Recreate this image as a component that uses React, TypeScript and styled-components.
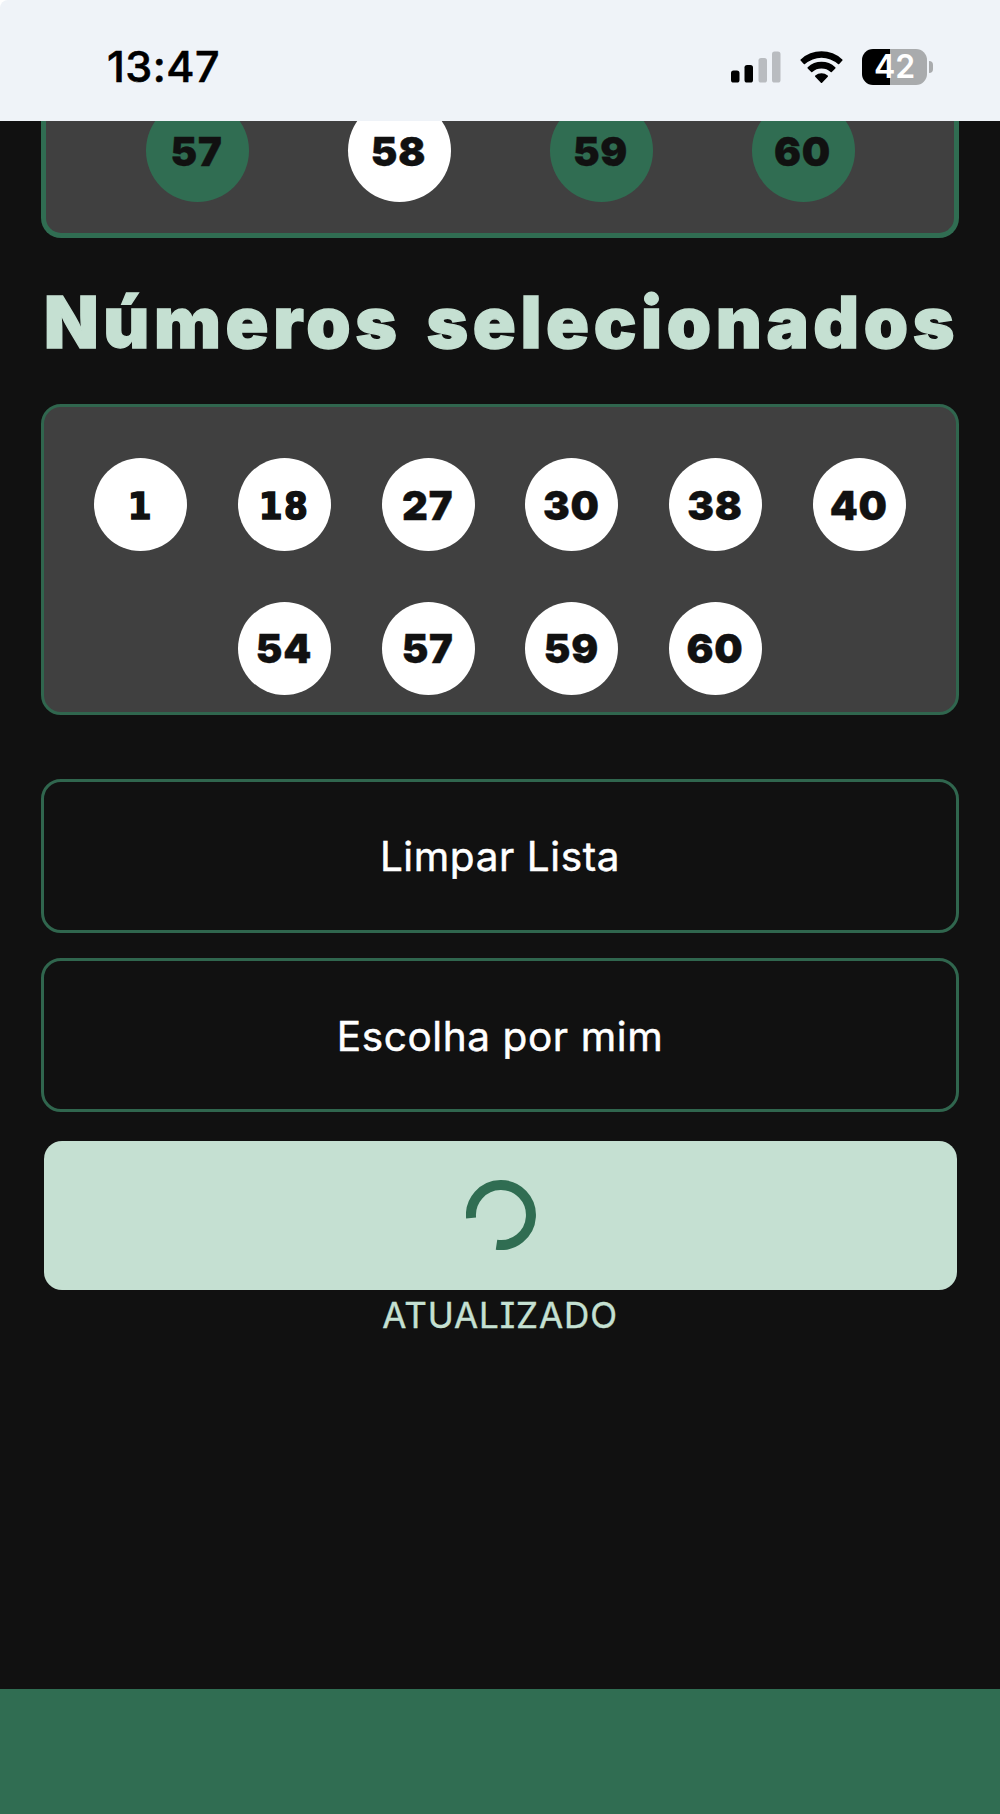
import React from 'react';
import styled, { createGlobalStyle } from 'styled-components';

const color = {
  ink: '#111111',
  panel: '#404040',
  green: '#306d52',
  line: '#30664e',
  mint: '#c5e0d2',
  status: '#eff3f8',
};

const GlobalStyle = createGlobalStyle`
  *, *::before, *::after { box-sizing: border-box; }
  body { margin: 0; background: ${color.ink}; }
`;

const Screen = styled.div`
  display: flex;
  flex-direction: column;
  height: 1814px;
  overflow: hidden;
  background: #ffffff;
  color: #ffffff;
  font-family: Inter, "Liberation Sans", sans-serif;
`;

const StatusBar = styled.header`
  flex: none;
  display: flex;
  align-items: center;
  justify-content: space-between;
  height: 120.5px;
  padding: 13px 67px 0 107px;
  border-top-left-radius: 8px;
  background: ${color.status};
  color: #000000;
`;

const Time = styled.span`
  margin-top: -2px;
  font-size: 43px;
  font-weight: 500;
  line-height: 52px;
  letter-spacing: 0.5px;
  -webkit-text-stroke: 0.6px #000000;
`;

const StatusIcons = styled.div`
  display: flex;
  align-items: center;
`;

const SignalIcon = styled.svg`
  width: 50px;
  height: 32px;
  margin-right: 19px;
`;

const WifiIcon = styled.svg`
  width: 43px;
  height: 34px;
  margin-right: 19px;
`;

const Battery = styled.div`
  display: flex;
  align-items: center;
  gap: 2px;
`;

const BatteryBody = styled.div`
  display: flex;
  align-items: center;
  justify-content: center;
  width: 65px;
  height: 36px;
  border-radius: 11px;
  background: linear-gradient(to right, #000000 0 28px, #a9abad 28px);
  color: #ffffff;
  font-size: 32px;
  font-weight: 600;
  line-height: 36px;
`;

const BatteryTip = styled.div`
  width: 4px;
  height: 12px;
  border-radius: 0 5px 5px 0;
  background: #a9abad;
`;

const Content = styled.main`
  flex: 1;
  display: flex;
  flex-direction: column;
  padding: 0 41px;
  background: ${color.ink};
`;

const GridPanel = styled.section`
  flex: none;
  display: flex;
  align-items: flex-end;
  justify-content: center;
  gap: 99px;
  height: 117.5px;
  padding-bottom: 31px;
  border: 5px solid ${color.green};
  border-top: 0;
  border-radius: 0 0 20px 20px;
  background: ${color.panel};
  overflow: hidden;
`;

const Ball = styled.span<{ $size: number; $taken?: boolean; $footed?: boolean }>`
  flex: none;
  display: flex;
  align-items: center;
  justify-content: center;
  width: ${(p) => p.$size}px;
  height: ${(p) => p.$size}px;
  padding: 2px 1px 0 0;
  border-radius: 50%;
  background: ${(p) => (p.$taken ? color.green : '#ffffff')};
  color: ${color.ink};
  font-family: ${(p) =>
    p.$footed
      ? '"DejaVu Sans Condensed", "DejaVu Sans", sans-serif'
      : 'Inter, "Liberation Sans", sans-serif'};
  font-stretch: ${(p) => (p.$footed ? 'condensed' : 'normal')};
  font-size: ${(p) => (p.$footed ? 38 : 40)}px;
  font-weight: ${(p) => (p.$footed ? 700 : 900)};
  line-height: 1;
  letter-spacing: ${(p) => (p.$footed ? 1.5 : 0.8)}px;
  -webkit-text-stroke: ${(p) => (p.$footed ? 1.5 : 0.4)}px ${color.ink};
`;

const Title = styled.h1`
  margin: 41px 0 1.5px;
  font-size: 71px;
  font-weight: 900;
  line-height: 86px;
  letter-spacing: 4.6px;
  word-spacing: 6px;
  text-align: center;
  text-indent: 3px;
  white-space: nowrap;
  color: ${color.mint};
  -webkit-text-stroke: 1.3px ${color.mint};
`;

const SelectedPanel = styled.section`
  flex: none;
  display: flex;
  flex-direction: column;
  gap: 50.7px;
  height: 311px;
  margin-top: 37.5px;
  padding-top: 51px;
  border: 3px solid ${color.line};
  border-radius: 20px;
  background: ${color.panel};
`;

const BallRow = styled.div`
  display: flex;
  justify-content: center;
  gap: 50.7px;
`;

const Actions = styled.div`
  display: flex;
  flex-direction: column;
  margin-top: 63.5px;
`;

const OutlineButton = styled.button`
  height: 154px;
  margin: 0 0 25.7px;
  padding: 2px 0 0;
  border: 3px solid ${color.line};
  border-radius: 20px;
  background: transparent;
  color: #ffffff;
  font-family: inherit;
  font-size: 40.5px;
  font-weight: 400;
  letter-spacing: 0.6px;
  -webkit-text-stroke: 0.5px #ffffff;
`;

const SaveButton = styled.button`
  display: flex;
  align-items: center;
  justify-content: center;
  height: 149.5px;
  margin: 3px 2.5px 0;
  padding: 0 0 1px 1px;
  border: 0;
  border-radius: 18px;
  background: ${color.mint};
`;

const Spinner = styled.svg`
  width: 70px;
  height: 70px;
`;

const Message = styled.p`
  margin: 4px 0 0;
  font-size: 35px;
  font-weight: 400;
  line-height: 42px;
  letter-spacing: 0.9px;
  text-align: center;
  font-feature-settings: "cv08", "ss02";
  color: ${color.mint};
  -webkit-text-stroke: 0.4px ${color.mint};
`;

const Footer = styled.footer`
  flex: none;
  height: 125px;
  background: ${color.green};
`;

const grid = [
  { n: 57, taken: true },
  { n: 58, taken: false },
  { n: 59, taken: true },
  { n: 60, taken: true },
];

const selectedRows = [
  [1, 18, 27, 30, 38, 40],
  [54, 57, 59, 60],
];

// The numeral 1 is set in a face that draws it with a foot.
const hasOne = (n: number) => String(n).includes('1');

export default function App() {
  return (
    <Screen>
      <GlobalStyle />
      <StatusBar>
        <Time>13:47</Time>
        <StatusIcons>
          <SignalIcon viewBox="0 0 50 32">
            <rect x="0" y="19.5" width="8.5" height="12" rx="2.6" />
            <rect x="13.5" y="14" width="8.5" height="17.5" rx="2.6" />
            <rect x="27.5" y="7" width="8.5" height="24.5" rx="2.6" fill="#b9bcc0" />
            <rect x="41" y="0.5" width="8.5" height="31" rx="2.6" fill="#b9bcc0" />
          </SignalIcon>
          <WifiIcon viewBox="0 0 43 34">
            <path d="M0.6 10.6 Q0.1 10 0.7 9.4 A30.5 30.5 0 0 1 42.3 9.4 Q42.9 10 42.4 10.6 L39.2 14.1 Q38.6 14.6 38 14.1 A24.6 24.6 0 0 0 5 14.1 Q4.4 14.6 3.8 14.1 Z" />
            <path d="M7.7 18.4 Q7.1 17.8 7.7 17.2 A20.5 20.5 0 0 1 35.3 17.2 Q35.9 17.8 35.3 18.4 L31.8 22 Q31.3 22.5 30.7 22 A14 14 0 0 0 12.3 22 Q11.7 22.5 11.2 22 Z" />
            <path d="M15.2 26.8 Q14.6 26.2 15.3 25.6 A9.7 9.7 0 0 1 27.7 25.6 Q28.4 26.2 27.8 26.8 L22.1 32.7 Q21.5 33.2 20.9 32.7 Z" />
          </WifiIcon>
          <Battery>
            <BatteryBody>42</BatteryBody>
            <BatteryTip />
          </Battery>
        </StatusIcons>
      </StatusBar>
      <Content>
        <GridPanel>
          {grid.map(({ n, taken }) => (
            <Ball key={n} $size={103} $taken={taken}>
              {n}
            </Ball>
          ))}
        </GridPanel>
        <Title>Números selecionados</Title>
        <SelectedPanel>
          {selectedRows.map((row) => (
            <BallRow key={row[0]}>
              {row.map((n) => (
                <Ball key={n} $size={93} $footed={hasOne(n)}>
                  {n}
                </Ball>
              ))}
            </BallRow>
          ))}
        </SelectedPanel>
        <Actions>
          <OutlineButton>Limpar Lista</OutlineButton>
          <OutlineButton>Escolha por mim</OutlineButton>
          <SaveButton>
            <Spinner viewBox="0 0 70 70">
              <path
                d="M5.1 38 A30 30 0 1 1 30.5 64.7"
                fill="none"
                stroke={color.green}
                strokeWidth="10"
              />
            </Spinner>
          </SaveButton>
          <Message>ATUALIZADO</Message>
        </Actions>
      </Content>
      <Footer />
    </Screen>
  );
}
